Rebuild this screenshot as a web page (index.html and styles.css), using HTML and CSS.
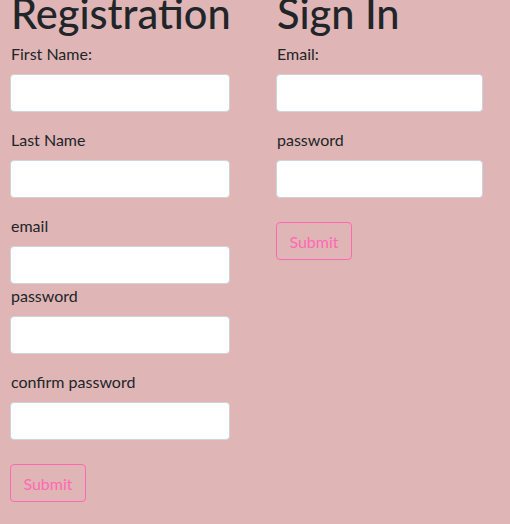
FILE: index.html
```html
<!DOCTYPE html>
<html>
<head>
<meta charset="utf-8">
<link rel="stylesheet" href="styles.css">
</head>
<body>
<div class="page">
  <form class="form form-reg">
    <h1 class="title">Registration</h1>
    <div class="group">
      <label class="label">First Name:</label>
      <input class="control" type="text">
    </div>
    <div class="group">
      <label class="label">Last Name</label>
      <input class="control" type="text">
    </div>
    <div class="group tight">
      <label class="label">email</label>
      <input class="control" type="text">
    </div>
    <div class="group">
      <label class="label">password</label>
      <input class="control" type="password">
    </div>
    <div class="group">
      <label class="label">confirm password</label>
      <input class="control" type="password">
    </div>
    <button class="btn" type="button">Submit</button>
  </form>
  <form class="form form-sign">
    <h1 class="title">Sign In</h1>
    <div class="group">
      <label class="label">Email:</label>
      <input class="control" type="text">
    </div>
    <div class="group">
      <label class="label">password</label>
      <input class="control" type="password">
    </div>
    <button class="btn" type="button">Submit</button>
  </form>
</div>
</body>
</html>
```
FILE: styles.css
```css
html, body {
  margin: 0;
  padding: 0;
  background: #dfb5b5;
  height: 100%;
  overflow: hidden;
}
body {
  font-family: "Lato", "Open Sans", sans-serif;
  font-size: 16px;
  color: #212529;
}
.page {
  display: flex;
  gap: 46px;
  padding-left: 10px;
  margin-top: -14px;
}
.form {
  display: flex;
  flex-direction: column;
  align-items: flex-start;
}
.form-reg { width: 220px; }
.form-sign { width: 207px; }
.title {
  margin: 0 0 5px 1px;
  padding-top: 3px;
  font-size: 41.5px;
  line-height: 48px;
  font-weight: 500;
  white-space: nowrap;
}
.group {
  width: 100%;
  margin-bottom: 16px;
}
.group.tight { margin-bottom: 0; }
.label {
  display: block;
  margin: 0 0 8px 1px;
  line-height: 24px;
}
.control {
  display: block;
  box-sizing: border-box;
  width: 100%;
  height: 38px;
  margin: 0;
  border: 1px solid #ced4da;
  border-radius: 4px;
  background: #fff;
}
.btn {
  margin-top: 8px;
  width: 76px;
  height: 38px;
  box-sizing: border-box;
  border: 1px solid #ff69b4;
  border-radius: 4px;
  background: transparent;
  color: #ff69b4;
  font-family: inherit;
  font-size: 16px;
  padding: 0;
}
```
